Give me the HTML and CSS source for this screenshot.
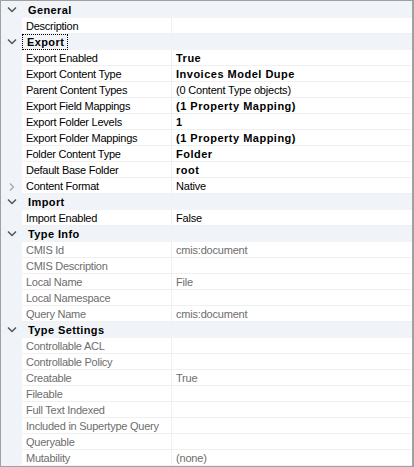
FILE: index.html
```html
<!DOCTYPE html>
<html>
<head>
<meta charset="utf-8">
<link rel="stylesheet" href="styles.css">
</head>
<body>
<div class="grid">
  <div class="cat"><span class="gut"><svg class="chev" width="10" height="7" viewBox="0 0 10 7"><path d="M1 1.5 L5 5.5 L9 1.5" /></svg></span><span class="cat-name">General</span></div>
  <div class="row"><span class="gut"></span><span class="name">Description</span><span class="val"></span></div>

  <div class="cat"><span class="gut"><svg class="chev" width="10" height="7" viewBox="0 0 10 7"><path d="M1 1.5 L5 5.5 L9 1.5" /></svg></span><span class="cat-name focus">Export</span></div>
  <div class="row"><span class="gut"></span><span class="name">Export Enabled</span><span class="val b">True</span></div>
  <div class="row"><span class="gut"></span><span class="name">Export Content Type</span><span class="val b">Invoices Model Dupe</span></div>
  <div class="row"><span class="gut"></span><span class="name">Parent Content Types</span><span class="val">(0 Content Type objects)</span></div>
  <div class="row"><span class="gut"></span><span class="name">Export Field Mappings</span><span class="val b">(1 Property Mapping)</span></div>
  <div class="row"><span class="gut"></span><span class="name">Export Folder Levels</span><span class="val b">1</span></div>
  <div class="row"><span class="gut"></span><span class="name">Export Folder Mappings</span><span class="val b">(1 Property Mapping)</span></div>
  <div class="row"><span class="gut"></span><span class="name">Folder Content Type</span><span class="val b">Folder</span></div>
  <div class="row"><span class="gut"></span><span class="name">Default Base Folder</span><span class="val b">root</span></div>
  <div class="row"><span class="gut"><svg class="chev-r" width="8" height="10" viewBox="0 0 8 10"><path d="M2 1.5 L5.5 5 L2 8.5" /></svg></span><span class="name">Content Format</span><span class="val">Native</span></div>

  <div class="cat"><span class="gut"><svg class="chev" width="10" height="7" viewBox="0 0 10 7"><path d="M1 1.5 L5 5.5 L9 1.5" /></svg></span><span class="cat-name">Import</span></div>
  <div class="row"><span class="gut"></span><span class="name">Import Enabled</span><span class="val">False</span></div>

  <div class="cat"><span class="gut"><svg class="chev" width="10" height="7" viewBox="0 0 10 7"><path d="M1 1.5 L5 5.5 L9 1.5" /></svg></span><span class="cat-name">Type Info</span></div>
  <div class="row dis"><span class="gut"></span><span class="name">CMIS Id</span><span class="val">cmis:document</span></div>
  <div class="row dis"><span class="gut"></span><span class="name">CMIS Description</span><span class="val"></span></div>
  <div class="row dis"><span class="gut"></span><span class="name">Local Name</span><span class="val">File</span></div>
  <div class="row dis"><span class="gut"></span><span class="name">Local Namespace</span><span class="val"></span></div>
  <div class="row dis"><span class="gut"></span><span class="name">Query Name</span><span class="val">cmis:document</span></div>

  <div class="cat"><span class="gut"><svg class="chev" width="10" height="7" viewBox="0 0 10 7"><path d="M1 1.5 L5 5.5 L9 1.5" /></svg></span><span class="cat-name">Type Settings</span></div>
  <div class="row dis"><span class="gut"></span><span class="name">Controllable ACL</span><span class="val"></span></div>
  <div class="row dis"><span class="gut"></span><span class="name">Controllable Policy</span><span class="val"></span></div>
  <div class="row dis"><span class="gut"></span><span class="name">Creatable</span><span class="val">True</span></div>
  <div class="row dis"><span class="gut"></span><span class="name">Fileable</span><span class="val"></span></div>
  <div class="row dis"><span class="gut"></span><span class="name">Full Text Indexed</span><span class="val"></span></div>
  <div class="row dis"><span class="gut"></span><span class="name">Included in Supertype Query</span><span class="val"></span></div>
  <div class="row dis"><span class="gut"></span><span class="name">Queryable</span><span class="val"></span></div>
  <div class="row dis last"><span class="gut"></span><span class="name">Mutability</span><span class="val">(none)</span></div>
</div>
</body>
</html>
```

FILE: styles.css
```css
html, body {
  margin: 0;
  padding: 0;
  background: #ffffff;
}

.grid {
  width: 414px;
  height: 467px;
  box-sizing: border-box;
  border-top: 1px solid #a0a0a0;
  border-left: 1px solid #a0a0a0;
  border-right: 2px solid #a0a0a0;
  border-bottom: 1px solid #a0a0a0;
  padding-top: 1px;
  background: #f0f4f9;
  font-family: "Liberation Sans", Arial, sans-serif;
  font-size: 11px;
  color: #000000;
  overflow: hidden;
  display: flex;
  flex-direction: column;
}

.cat, .row {
  display: flex;
  height: 16px;
  flex: none;
}

.gut {
  width: 21px;
  flex: none;
  display: flex;
  align-items: flex-start;
  justify-content: center;
}

.chev {
  margin-top: 4px;
  margin-left: 1px;
  fill: none;
  stroke: #555555;
  stroke-width: 1.5;
}

.chev-r {
  margin-top: 4px;
  fill: none;
  stroke: #a8a8a8;
  stroke-width: 1.3;
}

.cat-name {
  font-weight: bold;
  letter-spacing: 0.4px;
  padding-left: 5px;
  padding-right: 3px;
  height: 16px;
  box-sizing: border-box;
  border: 1px solid transparent;
  line-height: 14px;
}

.cat-name.focus {
  border: 1px dotted #000000;
  padding-left: 4px;
}

.name, .val {
  height: 16px;
  box-sizing: border-box;
  padding-top: 1px;
  line-height: 14px;
  background: #ffffff;
  border-bottom: 1px solid #f0f0f0;
  white-space: nowrap;
  overflow: hidden;
  letter-spacing: -0.25px;
}

.name {
  width: 149px;
  flex: none;
  padding-left: 4px;
}

.val {
  flex: 1;
  border-left: 1px solid #f0f0f0;
  padding-left: 4px;
  letter-spacing: -0.2px;
}

.val.b {
  font-weight: bold;
  letter-spacing: 0.5px;
}

.dis .name, .dis .val {
  color: #6d6d6d;
}
```
